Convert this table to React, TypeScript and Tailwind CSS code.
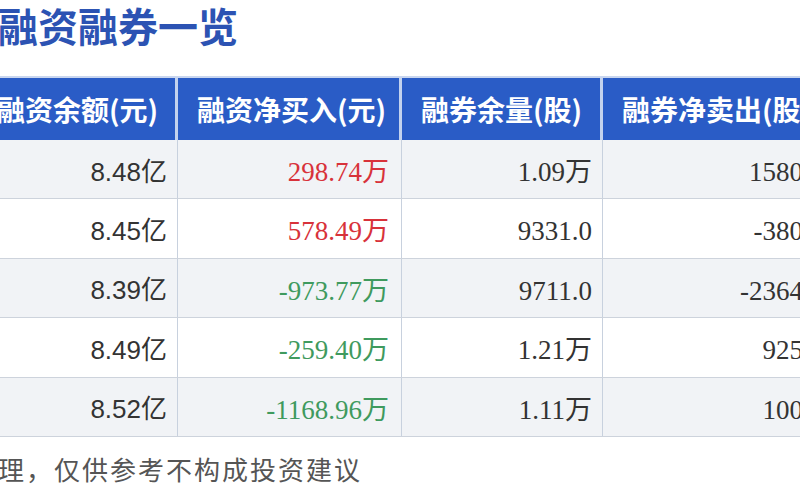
import React from "react";

const rows = [
  { a: "8.48亿", b: "298.74万", bc: "text-[#d8323a]", c: "1.09万", d: "1580" },
  { a: "8.45亿", b: "578.49万", bc: "text-[#d8323a]", c: "9331.0", d: "-380" },
  { a: "8.39亿", b: "-973.77万", bc: "text-[#3f9a5e]", c: "9711.0", d: "-2364" },
  { a: "8.49亿", b: "-259.40万", bc: "text-[#3f9a5e]", c: "1.21万", d: "925" },
  { a: "8.52亿", b: "-1168.96万", bc: "text-[#3f9a5e]", c: "1.11万", d: "100" },
];

const cjk = "font-['Noto_Sans_CJK_SC','Noto_Sans',sans-serif]";
const serif = "font-['Liberation_Serif','Noto_Sans_CJK_SC',serif]";
const sans = "font-['Liberation_Sans','Noto_Sans_CJK_SC',sans-serif]";

export default function App() {
  return (
    <div className="relative w-[800px] h-[500px] overflow-hidden bg-white">
      <div className="ml-[-22px] w-[860px]">
        <div className="h-[76px] flex items-start pl-[20px]">
          <h1 className={`${cjk} text-[40px] leading-[50px] font-bold text-[#2c53b3]`}>
            融资融券一览
          </h1>
        </div>
        <div className="border-t-2 border-[#c9d6ef] w-[825px]">
          <div className="grid grid-cols-[200px_224px_201px_200px] h-[62px] bg-[#2a5cc6] text-white">
            {["融资余额(元)", "融资净买入(元)", "融券余量(股)", "融券净卖出(股)"].map((h, i) => (
              <div
                key={h}
                className={`${cjk} flex items-center pl-[19px] text-[28px] font-bold whitespace-nowrap overflow-hidden ${
                  i < 3 ? "border-r-[3px] border-[#c3d2ee]" : ""
                }`}
              >
                {h}
              </div>
            ))}
          </div>
          {rows.map((r, i) => (
            <div
              key={i}
              className={`grid grid-cols-[200px_224px_201px_200px] h-[59.4px] border-b border-[#cdd3dc] ${
                i % 2 === 0 ? "bg-[#f1f3f6]" : "bg-white"
              }`}
            >
              <div className={`${sans} flex items-center justify-end pr-[10px] pt-[6px] text-[26px] text-[#333] border-r border-[#c8d1de]`}>
                {r.a}
              </div>
              <div className={`${serif} flex items-center justify-end pr-[12px] pt-[6px] text-[27px] ${r.bc} border-r border-[#c8d1de]`}>
                {r.b}
              </div>
              <div className={`${serif} flex items-center justify-end pr-[10px] pt-[6px] text-[27px] text-[#333] border-r border-[#c8d1de]`}>
                {r.c}
              </div>
              <div className={`${serif} flex items-center justify-end pr-[0px] pt-[6px] text-[27px] text-[#333]`}>
                {r.d}
              </div>
            </div>
          ))}
        </div>
        <div className="pl-[20px] pt-[14px]">
          <p className={`${cjk} text-[26px] leading-[36px] text-[#555] tracking-[2px] whitespace-nowrap`}>
            理，仅供参考不构成投资建议
          </p>
        </div>
      </div>
    </div>
  );
}
